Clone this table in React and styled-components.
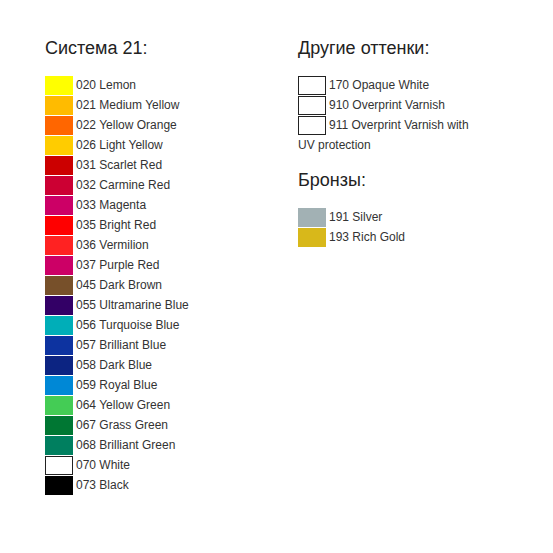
import styled, { createGlobalStyle } from 'styled-components';

const GlobalStyle = createGlobalStyle`
  body {
    margin: 0;
    background: #fff;
    font-family: Arial, "Liberation Sans", sans-serif;
  }
`;

const Page = styled.div`
  display: grid;
  grid-template-columns: 253px 178px;
  align-items: start;
  padding: 38px 0 0 45px;
`;

const Column = styled.div`
  display: flex;
  flex-direction: column;
`;

const Heading = styled.h3`
  margin: ${(props) => (props.$spaced ? '16px' : '0')} 0 17px;
  font-size: 18px;
  line-height: 21px;
  font-weight: normal;
  color: #222;
`;

const Row = styled.div`
  font-size: 12px;
  line-height: 18px;
  color: #333;
`;

const Swatch = styled.span`
  display: inline-block;
  box-sizing: border-box;
  width: 28px;
  height: 19px;
  margin: 0 3px 1px 0;
  vertical-align: top;
  background: ${(props) => props.$color};
  border: ${(props) => (props.$outlined ? '1px solid #222' : 'none')};
`;

const system21 = [
  ['020 Lemon', '#ffff00'],
  ['021 Medium Yellow', '#ffbb00'],
  ['022 Yellow Orange', '#ff6600'],
  ['026 Light Yellow', '#ffcc00'],
  ['031 Scarlet Red', '#cc0000'],
  ['032 Carmine Red', '#cc0033'],
  ['033 Magenta', '#cc0066'],
  ['035 Bright Red', '#ff0000'],
  ['036 Vermilion', '#ff2222'],
  ['037 Purple Red', '#cc0066'],
  ['045 Dark Brown', '#77502a'],
  ['055 Ultramarine Blue', '#330066'],
  ['056 Turquoise Blue', '#00aeb8'],
  ['057 Brilliant Blue', '#0d33a0'],
  ['058 Dark Blue', '#0c2482'],
  ['059 Royal Blue', '#0088d6'],
  ['064 Yellow Green', '#44cc55'],
  ['067 Grass Green', '#007733'],
  ['068 Brilliant Green', '#007f5f'],
  ['070 White', '#ffffff', true],
  ['073 Black', '#000000'],
];

const others = [
  ['170 Opaque White', '#ffffff', true],
  ['910 Overprint Varnish', '#ffffff', true],
  ['911 Overprint Varnish with UV protection', '#ffffff', true],
];

const bronze = [
  ['191 Silver', '#a2b1b4'],
  ['193 Rich Gold', '#d8b81a'],
];

const ColorList = ({ items }) =>
  items.map(([label, color, outlined]) => (
    <Row key={label}>
      <Swatch $color={color} $outlined={outlined} />
      {label}
    </Row>
  ));

export default function App() {
  return (
    <>
      <GlobalStyle />
      <Page>
        <Column>
          <Heading>Система 21:</Heading>
          <ColorList items={system21} />
        </Column>
        <Column>
          <Heading>Другие оттенки:</Heading>
          <ColorList items={others} />
          <Heading $spaced>Бронзы:</Heading>
          <ColorList items={bronze} />
        </Column>
      </Page>
    </>
  );
}
